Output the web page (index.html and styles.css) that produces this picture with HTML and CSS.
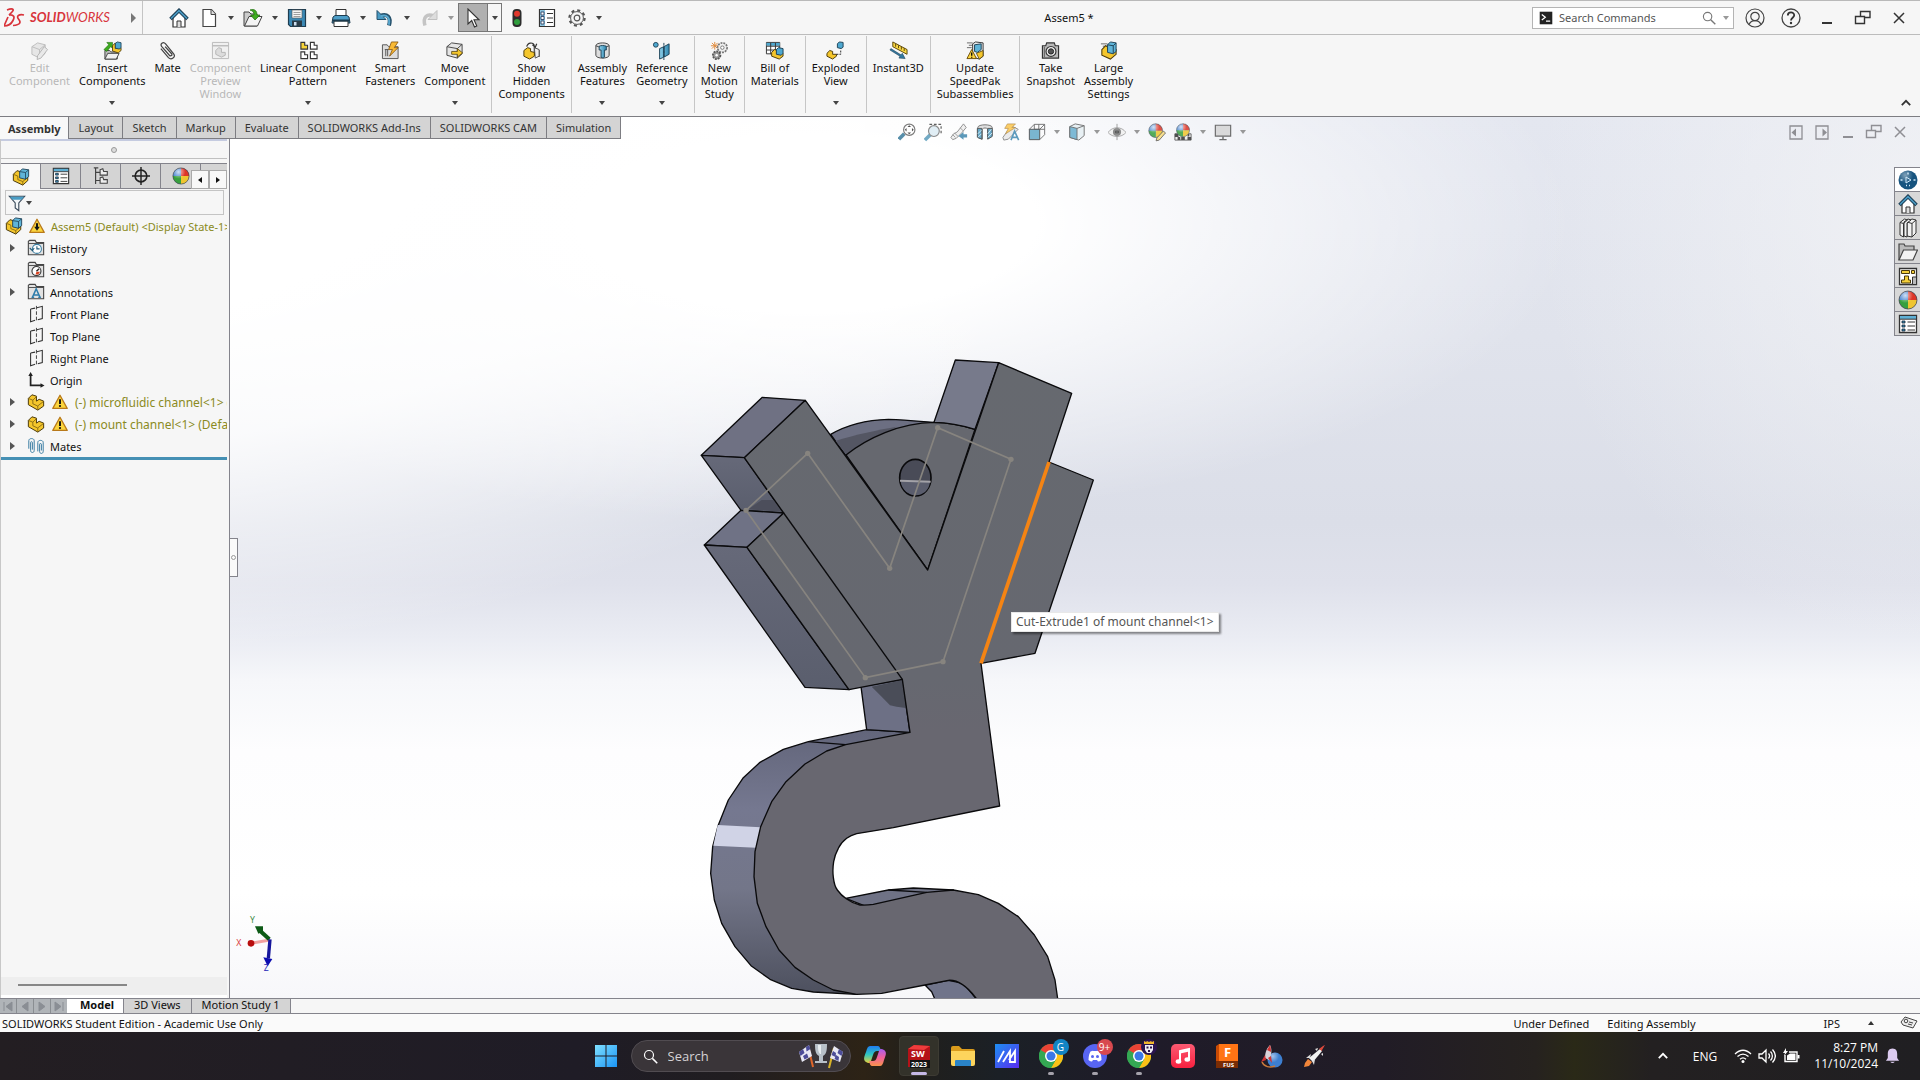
FILE: index.html
```html
<!DOCTYPE html>
<html lang="en">
<head>
    <meta charset="UTF-8">
    <meta name="viewport" content="width=device-width, initial-scale=1.0">
    <title>SOLIDWORKS - Assem5</title>
    <link rel="stylesheet" href="styles.css">
</head>
<body>
    <!-- Shared icons -->
    <svg class="sprite" aria-hidden="true">
        <defs>
            <linearGradient id="gWin" x1="0" y1="0" x2="1" y2="1"><stop offset="0" stop-color="#7fe0ff"/><stop offset="1" stop-color="#1a94f5"/></linearGradient>
            <linearGradient id="gBlue" x1="0" y1="0" x2="1" y2="0"><stop offset="0" stop-color="#8fd0ea"/><stop offset="1" stop-color="#2f87b0"/></linearGradient>
            <linearGradient id="gAsus" x1="0" y1="0" x2="1" y2="1"><stop offset="0" stop-color="#1d8ff2"/><stop offset="1" stop-color="#5a2cf0"/></linearGradient>
            <linearGradient id="gMusic" x1="0" y1="0" x2="0" y2="1"><stop offset="0" stop-color="#fb5a72"/><stop offset="1" stop-color="#f8203f"/></linearGradient>
            <linearGradient id="gCopA" x1="0" y1="0" x2="0" y2="1"><stop offset="0" stop-color="#1f7cf0"/><stop offset=".5" stop-color="#2fc6c0"/><stop offset="1" stop-color="#e8d23a"/></linearGradient>
            <linearGradient id="gCopB" x1="0" y1="0" x2="0" y2="1"><stop offset="0" stop-color="#a95cf0"/><stop offset=".5" stop-color="#f0619c"/><stop offset="1" stop-color="#f8934a"/></linearGradient>
            <radialGradient id="gShine" cx=".35" cy=".25" r=".7"><stop offset="0" stop-color="#fff" stop-opacity=".75"/><stop offset=".6" stop-color="#fff" stop-opacity="0"/></radialGradient>
        </defs>
        <symbol id="i-home" viewBox="0 0 20 20"><path d="M4 9v10h12V9L10 3z" fill="#fff" stroke="#333" stroke-width="1.2"/><path d="M8 19v-6h4v6" fill="#ddd" stroke="#333"/><path d="M1.5 11L10 2.5 18.500 11" fill="none" stroke="#1d3e54" stroke-width="3.6"/><path d="M2 10.500L10 2.700 18 10.500" fill="none" stroke="#4a9bc4" stroke-width="1.600"/></symbol>
        <symbol id="i-new" viewBox="0 0 20 20"><path d="M4 1.500h8.500L16.500 6v12.500H4z" fill="#fff" stroke="#444" stroke-width="1.2"/><path d="M12 1.500V6.500h4.500" fill="#ddd" stroke="#444"/></symbol>
        <symbol id="i-open" viewBox="0 0 20 20"><path d="M1 4h5l2 2h6v12H1z" fill="#ccc" stroke="#444"/><path d="M1.500 18L6 8.500h13L14.500 18z" fill="#f4f4f4" stroke="#444"/><path d="M7 2c5-1.500 7 1 7 5h3l-5 5-4.500-5H11c0-3-1-4-4-5z" fill="#3eaa1f" stroke="#1d6b0b" stroke-width=".7"/></symbol>
        <symbol id="i-save" viewBox="0 0 20 20"><path d="M1.500 1.500h17v17h-15l-2-2z" fill="#3b89b5" stroke="#1f3d50" stroke-width="1.2"/><path d="M5 2h10v8H5z" fill="#f5f5f5" stroke="#555" stroke-width=".6"/><path d="M6.500 4.500h7M6.500 6.500h7M6.500 8.500h7" stroke="#888" stroke-width=".8"/><path d="M5 12.500h10v6H5z" fill="#2a3c48"/><path d="M7 14h2.500v3.500H7z" fill="#cde"/></symbol>
        <symbol id="i-print" viewBox="0 0 20 20"><path d="M5 1.500h10V9H5z" fill="#fff" stroke="#333"/><path d="M2 9l2-1.500h12L18 9l1 6H1z" fill="#4d9ec8" stroke="#1f3d50"/><path d="M3 13h14v5.500H3z" fill="#fff" stroke="#333"/><path d="M1.500 12.500h17" stroke="#1b3a4d" stroke-width="2"/></symbol>
        <symbol id="i-undo" viewBox="0 0 20 20"><path d="M5 8C12 5 16.500 9 14 17.500" fill="none" stroke="#25516c" stroke-width="4"/><path d="M2 2.500v9h9z" fill="#4a9bc4" stroke="#25516c"/><path d="M6 8C12 6 15.500 10 13.800 16.800" fill="none" stroke="#5aa9d0" stroke-width="2"/></symbol>
        <symbol id="i-redo" viewBox="0 0 20 20"><path d="M15 8C8 5 3.500 9 6 17.500" fill="none" stroke="#c4c4c4" stroke-width="3.500"/><path d="M18 2.500v9H9z" fill="#ddd" stroke="#c0c0c0"/></symbol>
        <symbol id="i-cursor" viewBox="0 0 20 20"><path d="M5 1v15l3.700-3.500L11.500 19l2.300-1-2.800-6.200H16z" fill="#fff" stroke="#333" stroke-width="1.100"/></symbol>
        <symbol id="i-traffic" viewBox="0 0 20 20"><rect x="5.500" y="1" width="9" height="18" rx="4" fill="#2c2c2c"/><circle cx="10" cy="5.800" r="3" fill="#e0372c"/><circle cx="10" cy="14" r="3" fill="#2f9d3d"/></symbol>
        <symbol id="i-options" viewBox="0 0 20 20"><path d="M2.500 1.500h15v17h-15z" fill="#fff" stroke="#333" stroke-width="1.2"/><path d="M3 2h5v16H3z" fill="#8cc4df"/><path d="M4 4h3v3H4zM4 8.500h3v3H4zM4 13h3v3H4z" fill="#fff" stroke="#235" stroke-width=".8"/><path d="M10 5.500h6M10 10h6M10 14.500h6" stroke="#333" stroke-width="1.200"/></symbol>
        <symbol id="i-gear" viewBox="0 0 20 20"><circle cx="10" cy="10" r="7.600" fill="none" stroke="#555" stroke-width="2.200" stroke-dasharray="3 2.970"/><circle cx="10" cy="10" r="6.400" fill="#f6f6f6" stroke="#555"/><circle cx="10" cy="10" r="2.800" fill="none" stroke="#555" stroke-width="1.200"/></symbol>
        <symbol id="i-prompt" viewBox="0 0 20 20"><path d="M1 1h18v18H1z" fill="#222"/><path d="M4 5l5 4-5 4M10 14.500h6" fill="none" stroke="#fff" stroke-width="1.800"/></symbol>
        <symbol id="i-search" viewBox="0 0 20 20"><circle cx="8" cy="8" r="6" fill="none" stroke="currentColor" stroke-width="1.600"/><path d="M12.500 12.500L19 19" stroke="currentColor" stroke-width="2"/></symbol>
        <symbol id="i-user" viewBox="0 0 20 20"><g fill="none" stroke="#444" stroke-width="1.200"><circle cx="10" cy="10" r="9"/><circle cx="10" cy="8.500" r="4.200"/><path d="M4 16.500c1.500-3 3.500-3.800 6-3.800s4.500.8 6 3.800"/></g></symbol>
        <symbol id="i-help" viewBox="0 0 20 20"><circle cx="10" cy="10" r="9" fill="none" stroke="#444" stroke-width="1.300"/><path d="M6.800 7.500c0-4 6.400-4 6.400-.2 0 2.400-3.200 2.600-3.200 5.200" fill="none" stroke="#333" stroke-width="1.800"/><circle cx="10" cy="15" r="1.200" fill="#333"/></symbol>
        <symbol id="i-min" viewBox="0 0 20 20"><path d="M5 15h10" stroke="currentColor" stroke-width="2"/></symbol>
        <symbol id="i-restore" viewBox="0 0 20 20"><path d="M2.500 8.500h9v7h-9zM7.500 8V3.500h9.500v6h-5" fill="none" stroke="currentColor" stroke-width="1.400"/></symbol>
        <symbol id="i-close" viewBox="0 0 20 20"><path d="M5 5l10 10M15 5L5 15" stroke="currentColor" stroke-width="1.500"/></symbol>
        <symbol id="i-chev" viewBox="0 0 20 20"><path d="M4 13l6-6 6 6" fill="none" stroke="currentColor" stroke-width="2.600"/></symbol>
        <symbol id="i-part" viewBox="0 0 20 20"><path d="M1.500 6l4-4 5 1.500V9l3-2 5 2v5.500L12 19 1.500 13z" fill="#f4c62c" stroke="#4b3a0a" stroke-width="1.100"/><path d="M1.500 6l5 2v4l5.500 2.500V19M6.500 8L10.500 4M12 14.300l6.500-5" fill="none" stroke="#7a5f10" stroke-width=".9"/></symbol>
        <symbol id="i-asm" viewBox="0 0 20 20"><path d="M1.500 7l4-4 4 1v6l8-1v5L12 19 1.500 14z" fill="#f4c62c" stroke="#4b3a0a" stroke-width="1.100"/><path d="M1.500 7l5 2v4l5.500 2V19M12 15l6-5" fill="none" stroke="#7a5f10" stroke-width=".9"/><path d="M8.500 4l3-3 7 1v7.500l-3.500 3-6.500-1.500z" fill="#5fb4d8" stroke="#1e4257"/><path d="M8.500 4l6.500 1v7.500M15 5l3.500-3" fill="none" stroke="#1e4257" stroke-width=".9"/></symbol>
        <symbol id="i-warn" viewBox="0 0 20 20"><path d="M10 1.500L19 18H1z" fill="#fcd53c" stroke="#b8791a" stroke-width="1.600" stroke-linejoin="round"/><path d="M10 6.500v6" stroke="#111" stroke-width="2.400"/><circle cx="10" cy="15" r="1.400" fill="#111"/></symbol>
        <symbol id="i-warndown" viewBox="0 0 20 20"><path d="M10 1.500L19 18H1z" fill="#fcd53c" stroke="#b8791a" stroke-width="1.600" stroke-linejoin="round"/><path d="M10 6.500v5" stroke="#111" stroke-width="2.600"/><path d="M6.500 11h7L10 15.800z" fill="#111"/></symbol>
        <symbol id="i-editc" viewBox="0 0 20 20"><path d="M2 6l6-4 8 2v9l-6 5-8-4z" fill="#e6e6e6" stroke="#bdbdbd"/><path d="M2 6l8 3v8M10 9l6-5" fill="none" stroke="#bdbdbd"/><path d="M15 6l3.500 3-7 9-4 1.500.5-4z" fill="#e9e9e9" stroke="#b4b4b4"/></symbol>
        <symbol id="i-insert" viewBox="0 0 20 20"><path d="M2 10h5l1.500 1.500H15V19H2z" fill="#bbb" stroke="#444"/><path d="M2 19l3-6h12l-3 6z" fill="#f0f0f0" stroke="#444"/><path d="M1 9l5-5-2-2.500h6V7.500L8 6 4 11z" fill="#3eaa1f" stroke="#1d6b0b" stroke-width=".6"/><path d="M10 5l3-3v6l6-1v3l-3 2.500-6-2z" fill="#f4c62c" stroke="#4b3a0a" stroke-width=".9"/><path d="M13 2.500L15 1l4 .8V7l-2 1.500-4-1z" fill="#4ea8d0" stroke="#1e4257" stroke-width=".9"/></symbol>
        <symbol id="i-clip" viewBox="0 0 20 20"><path d="M3 8l8 9.500c3 3 8-.5 5.500-4L8 3C5.500 0 1.500 3 4 6l8 9c1.500 1.500 3.500 0 2.300-1.600L7.500 6" fill="none" stroke="#444" stroke-width="1.300"/></symbol>
        <symbol id="i-preview" viewBox="0 0 20 20"><path d="M1.500 1.500h17v17h-17z" fill="#f0f0f0" stroke="#bbb"/><path d="M1.500 5h17" stroke="#bbb" stroke-width="1.500"/><path d="M5 10l3-3 3 1v4l4 0v3l-4 2-6-3z" fill="#dcdcdc" stroke="#b5b5b5"/></symbol>
        <symbol id="i-pattern" viewBox="0 0 20 20"><path d="M2 1.500h4v3h3v4H2z" fill="#f7d43a" stroke="#333" stroke-width="1.200"/><path d="M12 1.500h4v3h3v4h-7zM2 11.500h4v3h3v4H2zM12 11.500h4v3h3v4h-7z" fill="#fff" stroke="#333" stroke-width="1.200"/></symbol>
        <symbol id="i-smart" viewBox="0 0 20 20"><path d="M1.500 4h5l1.500 2h10v12.500h-16.500z" fill="#ddd" stroke="#555"/><path d="M4 9h4M5 9v7M7 9v7" stroke="#555"/><path d="M11 1h7l-4 6h4l-9 9 3-7H8z" fill="#f9b934" stroke="#7d4d07" stroke-width=".8"/></symbol>
        <symbol id="i-move" viewBox="0 0 20 20"><path d="M2 6l5-4 11 1.500v10L13 18 2 15z" fill="#e5e5e5" stroke="#444"/><path d="M2 6l11 2v10M13 8l5-4.500" fill="none" stroke="#444"/><path d="M7 11h6V8l5.500 4.500L13 17v-3H7z" fill="#f4c62c" stroke="#4b3a0a" stroke-width=".8"/></symbol>
        <symbol id="i-show" viewBox="0 0 20 20"><path d="M5 6c1-5 7-5 8-1M11 4l3 2.500L15.500 3M13 7l5 3v6l-5-2z" fill="none" stroke="#333" stroke-width="1.300"/><path d="M13 7l5 2v7l-4 2z" fill="#eee" stroke="#555"/><path d="M2 10l4-3 3 1v3l4 1v4l-5 3-6-3z" fill="#f4c62c" stroke="#4b3a0a"/></symbol>
        <symbol id="i-feat" viewBox="0 0 20 20"><path d="M3 5c0-4 14-4 14 0v10c0 4-14 4-14 0z" fill="#ddd" stroke="#444"/><path d="M3 5c3 2 11 2 14 0" fill="none" stroke="#444"/><path d="M6.500 5.500c2-1 5-1 7.500 0v4h-2v7.500c-1 1-2 1-3.500 0V9.500h-2z" fill="url(#gBlue)" stroke="#1e4257"/></symbol>
        <symbol id="i-refg" viewBox="0 0 20 20"><circle cx="4" cy="4" r="2.500" fill="#4ea8d0" stroke="#1e4257"/><path d="M8 8l4.500-2v11L8 19zM12.500 6L18 3v11l-5.500 3z" fill="url(#gBlue)" stroke="#1e4257"/><path d="M12.500 2v18" stroke="#1e4257" stroke-dasharray="3 1"/></symbol>
        <symbol id="i-motion" viewBox="0 0 20 20"><path d="M5 1v8M1 5h8M2 2l6 6M8 2L2 8" stroke="#e08a3c"/><circle cx="13" cy="7" r="5" fill="#eee" stroke="#777" stroke-width="1.800" stroke-dasharray="2 1"/><circle cx="13" cy="7" r="1.800" fill="#fff" stroke="#777"/><circle cx="7" cy="15" r="4" fill="#999" stroke="#555" stroke-width="1.800" stroke-dasharray="2 1"/><circle cx="7" cy="15" r="1.300" fill="#fff"/></symbol>
        <symbol id="i-bom" viewBox="0 0 20 20"><path d="M1.500 1.500h14v12h-14z" fill="#fff" stroke="#333"/><path d="M1.500 2h14v3h-14z" fill="#4ea8d0"/><path d="M1.500 5.500h14M1.500 9.500h14M6 2v12M11 2v12" stroke="#333"/><path d="M7 12l3-3 3 1v4l6-1v3l-4 3-8-3z" fill="#f4c62c" stroke="#4b3a0a"/><path d="M12 9l2-2 5 1v5l-2 2-5-1z" fill="#4ea8d0" stroke="#1e4257"/></symbol>
        <symbol id="i-explode" viewBox="0 0 20 20"><path d="M1 13l3-3 3 1v3l4 0v2l-4 3-6-3z" fill="#f4c62c" stroke="#4b3a0a"/><path d="M12 3l2-2 4 .5v5L16 8l-4-1z" fill="#4ea8d0" stroke="#1e4257"/><path d="M11 14h4.500V9" fill="none" stroke="#222" stroke-dasharray="2 1.200"/></symbol>
        <symbol id="i-instant" viewBox="0 0 20 20"><path d="M4 1l15 8v5L4 6z" fill="#f9d743" stroke="#5a4608"/><path d="M7 3v3M10 4.500v3M13 6v3M16 7.500v3" stroke="#5a4608"/><path d="M1 9.500l10.500 6.500-1 2 6.500.5-3-5.500-1.500 1.500L2 8z" fill="#33789f" stroke="#1e4257" stroke-width=".6"/></symbol>
        <symbol id="i-speed" viewBox="0 0 20 20"><path d="M1 2h6M3 4.500h5M1 7h5" stroke="#666"/><path d="M7 3l3-2 8 1v14l-4 3-7-2z" fill="#eee" stroke="#333"/><path d="M9 4l7-1v6l-4 3-3-1z" fill="#5fb4d8" stroke="#1e4257"/><path d="M11 13l7-3v6l-4 3z" fill="#f4c62c" stroke="#4b3a0a" stroke-width=".8"/><path d="M6 9l5 9.500H1z" fill="#fcd53c" stroke="#6d4e08"/><path d="M6 12v3.500M6 16.500v1" stroke="#111" stroke-width="1.500"/></symbol>
        <symbol id="i-camera" viewBox="0 0 20 20"><path d="M1.500 5H5l1-3h8l1 3h3.500v13h-17z" fill="#b9b9b9" stroke="#333" stroke-width="1.200"/><circle cx="10.500" cy="11" r="5.200" fill="#f2f2f2" stroke="#333" stroke-width="1.200"/><circle cx="10.500" cy="11" r="2.800" fill="#555" stroke="#222"/><path d="M3.500 6v11" stroke="#555"/></symbol>
        <symbol id="i-large" viewBox="0 0 20 20"><path d="M2 3h7M4 5.500h5" stroke="#666"/><path d="M3 9l4-4 2 1v4l9-1v5l-6 5-9-4z" fill="#f4c62c" stroke="#4b3a0a" stroke-width="1.100"/><path d="M9 4l3-3 6 1v9l-3 2.500-6-1.500z" fill="#5fb4d8" stroke="#1e4257"/><path d="M9 4l6 1v8M15 5l3-3" fill="none" stroke="#1e4257"/></symbol>
        <symbol id="i-zfit" viewBox="0 0 20 20"><path d="M1 18l6-6" stroke="#3a7b9c" stroke-width="4"/><circle cx="12.500" cy="7.500" r="6.300" fill="#fff" stroke="#666" stroke-width="1.300"/><path d="M12.500 2.500l2 2h-4zM12.500 12.500l2-2h-4zM7.500 7.500l2-2v4zM17.500 7.500l-2-2v4z" fill="#333"/></symbol>
        <symbol id="i-zarea" viewBox="0 0 20 20"><path d="M1 19l6-6" stroke="#5a9cbb" stroke-width="4"/><path d="M6 1.500h13v12" fill="none" stroke="#444" stroke-width="1.300" stroke-dasharray="3 2"/><circle cx="11" cy="9" r="6" fill="#dcecf4" stroke="#777" stroke-width="1.300"/></symbol>
        <symbol id="i-prev" viewBox="0 0 20 20"><path d="M15 1l3 4-5 6-6 6-4 1.500L1 16l3-4 4-2z" fill="#eee" stroke="#777"/><path d="M5 11l4 4M11 5l4 4M3 13l3 3" stroke="#888"/><path d="M19 12.500v3.500h-4v2.500L9.500 14.500 15 10v2.500z" fill="#3f87ad"/></symbol>
        <symbol id="i-section" viewBox="0 0 20 20"><path d="M2 5c0-4 16-4 16 0v9l-5 3V7c-1-2-5-2-6 0v11l-5-2z" fill="#dcdcdc" stroke="#555"/><path d="M1.500 6h5v12l-5-2zM13 6h5v9l-5 3z" fill="#4f9dc2" stroke="#333"/><path d="M2 12l4-4M2 16l4-4M13 12l4-5M13 16l5-5" stroke="#d8eef8"/></symbol>
        <symbol id="i-annot" viewBox="0 0 20 20"><path d="M12 4l6 3-6 6-5 5-5 1-1-3 5-7z" fill="#e8e8e8" stroke="#777"/><path d="M6 1h9l-4 4h4L4 12l3-6H3z" fill="#fbc64e" stroke="#a6772a" stroke-width=".7"/><path d="M10 19l4-10 4.500 10M11.500 16h5.500" fill="none" stroke="#4089b3" stroke-width="1.800"/></symbol>
        <symbol id="i-orient" viewBox="0 0 20 20"><path d="M7 1.500h11.500V13L13 18.500M7 1.500L1.500 7M18.500 1.500L13 7M12 1.500V7M18.500 7H7V1.500" fill="none" stroke="#555"/><path d="M1.500 7H13v11.500H1.500z" fill="#64a9c9" stroke="#333"/></symbol>
        <symbol id="i-display" viewBox="0 0 20 20"><path d="M2 4l6-3 10 2v11l-6 5-10-3z" fill="#e6eff3" stroke="#555"/><path d="M2 4l8 2v12.500l-8-2.500z" fill="#69b0d0" stroke="#555"/><path d="M10 6l8-3" stroke="#555"/></symbol>
        <symbol id="i-eye" viewBox="0 0 20 20"><path d="M0 10.500c5-7 15-7 20 0-5 6-15 6-20 0z" fill="#f0f0f0" stroke="#999"/><circle cx="10" cy="10" r="4.500" fill="#777"/><circle cx="10" cy="10" r="2" fill="#222"/><path d="M10 1v18" stroke="#888"/></symbol>
        <symbol id="i-sphere" viewBox="0 0 20 20"><circle cx="10" cy="10" r="9" fill="#3f7fd0"/><path d="M10 10V1a9 9 0 0 1 9 9z" fill="#dd3527"/><path d="M10 10h9a9 9 0 0 1-9 9z" fill="#efc52f"/><path d="M10 10v9a9 9 0 0 1-9-9z" fill="#37a03e"/><circle cx="10" cy="10" r="9" fill="url(#gShine)" stroke="#444" stroke-width=".7"/></symbol>
        <symbol id="i-appear" viewBox="0 0 20 20"><use href="#i-sphere" width="17" height="17"/><path d="M17 9l2.500 2-7 8-3.500.8.800-3.200z" fill="#f9dc7c" stroke="#444" stroke-width=".9"/></symbol>
        <symbol id="i-scene" viewBox="0 0 20 20"><path d="M1 12h18v7H1z" fill="#eee" stroke="#444"/><path d="M1 12h4v3.500H1zM8 15.500h4V19H8zM15 15.500h4V19h-4zM4 15.500h3V19H4zM15 12h2v3h-2z" fill="#333"/><use href="#i-sphere" x="2" width="16" height="16"/></symbol>
        <symbol id="i-monitor" viewBox="0 0 20 20"><path d="M1.500 2.500h17v12h-17z" fill="#d5d5d5" stroke="#555" stroke-width="1.300"/><path d="M10 15v3M6 18.500h8" stroke="#555" stroke-width="1.600"/></symbol>
        <symbol id="i-paneL" viewBox="0 0 20 20"><path d="M4 4h12v13H4z" fill="none" stroke="currentColor" stroke-width="1.300"/><path d="M10 6.500v8L5.500 10.500z" fill="currentColor"/></symbol>
        <symbol id="i-paneR" viewBox="0 0 20 20"><path d="M4 4h12v13H4z" fill="none" stroke="currentColor" stroke-width="1.300"/><path d="M10.500 6.500v8L15 10.500z" fill="currentColor"/></symbol>
        <symbol id="i-props" viewBox="0 0 20 20"><path d="M1.500 1.500h17v17h-17z" fill="#fff" stroke="#333" stroke-width="1.300"/><path d="M2 2h16v3H2z" fill="#5fb0d4"/><path d="M4 7h3v2H4zM4 11h3v2H4zM4 15h3v2H4z" fill="#3f92ba" stroke="#123" stroke-width=".8"/><path d="M9.500 8H17M9.500 12H17M9.500 16H17M2 5.200h16" stroke="#333"/></symbol>
        <symbol id="i-config" viewBox="0 0 20 20"><path d="M2 1h5M4 1v18M4 6h6M4 15h6" stroke="#444" stroke-width="1.300" fill="none"/><path d="M9 3l3-1 1 3h4v4h-8zM9 12l3-1 1 3h4v4h-8z" fill="#eee" stroke="#444" stroke-width="1.200"/></symbol>
        <symbol id="i-target" viewBox="0 0 20 20"><circle cx="10" cy="10" r="6.500" fill="none" stroke="#222" stroke-width="1.800"/><path d="M10 0v20M0 10h20" stroke="#222" stroke-width="1.600"/></symbol>
        <symbol id="i-funnel" viewBox="0 0 20 20"><path d="M1.500 2.500h17L12 10v8.500L8 15.500V10z" fill="#f2f6f8" stroke="#345" stroke-width="1.200"/><path d="M2 3h16l-3 3.500H5z" fill="#4a9dc5"/></symbol>
        <symbol id="i-folder" viewBox="0 0 20 20"><path d="M1.500 17.500v-15L3 1.500h6L10.500 4h8v13.500z" fill="#e2e2e2" stroke="#444" stroke-width="1.200"/><path d="M1.500 5h17" stroke="#444"/></symbol>
        <symbol id="i-history" viewBox="0 0 20 20"><use href="#i-folder"/><circle cx="11" cy="11" r="5" fill="#fff" stroke="#3a7fa3" stroke-width="1.200"/><path d="M11 8v3h3M3 10l3 3 2-3" fill="none" stroke="#1e5877" stroke-width="1.200"/></symbol>
        <symbol id="i-sensor" viewBox="0 0 20 20"><use href="#i-folder"/><circle cx="10.500" cy="11.200" r="5" fill="#fff" stroke="#333" stroke-width="1.200"/><path d="M10.500 11.500l3-3" stroke="#222" stroke-width="1.500"/><path d="M10.500 12h4l-2 3h-3z" fill="#d9421f"/></symbol>
        <symbol id="i-annof" viewBox="0 0 20 20"><use href="#i-folder"/><path d="M6 16l4.200-9.500L14.500 16M7.500 13.300h5.500M5 16h3M12.500 16h3" fill="none" stroke="#2d7caa" stroke-width="1.600"/></symbol>
        <symbol id="i-plane" viewBox="0 0 20 20"><path d="M4 4.500l5-1M11 3l6-1.500V15l-5 1.500M9 17l-5 1.500v-14" fill="none" stroke="#333" stroke-width="1.200"/><path d="M10.500 1v18" stroke="#333" stroke-dasharray="4 2"/></symbol>
        <symbol id="i-origin" viewBox="0 0 20 20"><path d="M4 4v12h12" fill="none" stroke="#222" stroke-width="1.900"/><path d="M1.500 5.500L4 1l2.500 4.500zM15 13.500l4.500 2.500-4.500 2.500z" fill="#222"/></symbol>
        <symbol id="i-mates" viewBox="0 0 20 20"><path d="M2 13V4c0-3 6-3 6 0v11c0 3-4 3-4 0V6c0-1 2-1 2 0v8M12 16V6c0-3 6-3 6 0v10c0 3-4 3-4 0V8c0-1 2-1 2 0v7" fill="none" stroke="#3b7da3" stroke-width="1.100"/></symbol>
        <symbol id="i-3dx" viewBox="0 0 20 20"><circle cx="10" cy="10" r="9.500" fill="#17547f"/><circle cx="10" cy="10" r="9.500" fill="url(#gShine)" opacity=".6"/><path d="M8 7l5 3-5 3z" fill="none" stroke="#cfe8f8"/><path d="M2.500 10h2M15.500 10h2M10 2.500v2M8 15.500h1M11 15.500h1" stroke="#cfe8f8" stroke-width="1.500"/></symbol>
        <symbol id="i-books" viewBox="0 0 20 20"><g fill="#f2f2f2" stroke="#333"><path d="M9 4l5-3 4 1v13l-4 4-5-1z"/><path d="M14 5.500l4-3.500M14 5.500V19M9 4l5 1.500"/><path d="M6 4l4-3 3 1-4 3v14l-3-1zM2 4.500L6.500 1l3 1-4 3.500V19L2 17z"/><path d="M2 4.500l3.500 1"/></g></symbol>
        <symbol id="i-pfolder" viewBox="0 0 20 20"><path d="M1 18V2h5l1 2h9v4" fill="#bbb" stroke="#444" stroke-width="1.200"/><path d="M1 18L5.500 8H19.500L15 18z" fill="#f3f3f3" stroke="#444" stroke-width="1.200"/></symbol>
        <symbol id="i-palette" viewBox="0 0 20 20"><path d="M1.500 2.500h17v16h-17z" fill="#fff" stroke="#333" stroke-width="1.300"/><path d="M3.500 4.500h8v3h-8zM13.500 4.500h3v3h-3zM3.500 17v-3h3v-4h4v4h2v3z" fill="#f4cf3a" stroke="#4b3a0a"/><path d="M14.500 11h4v7.500h-4z" fill="#bbb" stroke="#333"/></symbol>
        <symbol id="i-chrome" viewBox="0 0 24 24"><circle cx="12" cy="12" r="12" fill="#34a853"/><path d="M12 12L1.600 6A12 12 0 0 1 22.400 6z" fill="#ea4335"/><path d="M12 6h10.400A12 12 0 0 1 12 24l5.200-9z" fill="#fbc116"/><path d="M1.600 6A12 12 0 0 0 12 24l5.200-9H7z" fill="#34a853"/><circle cx="12" cy="12" r="6" fill="#fff"/><circle cx="12" cy="12" r="4.500" fill="#3b78e7"/></symbol>
    </svg>

    <!-- Title bar -->
    <header class="titlebar">
        <div class="brand">
            <svg width="22" height="22" viewBox="0 0 22 22"><g fill="none" stroke="#d8343b" stroke-width="1.700"><path d="M3 3c5-2 8-1 5 2L5 8"/><path d="M5 8c5-.5 6 2 4 5.500C7.500 16.500 4 19 0 19L4 10"/><path d="M20 8c-5-1-8 1-5.500 4S17 18 9 18.500"/></g></svg>
            <span class="brand-name"><b>SOLID</b>WORKS</span>
            <button class="brand-arrow" aria-label="Show menus"></button>
        </div>
        <div class="quick">
            <button class="tool" aria-label="Home"><svg><use href="#i-home"/></svg></button>
            <button class="tool" aria-label="New"><svg><use href="#i-new"/></svg></button><button class="drop" aria-label="New options"></button>
            <button class="tool" aria-label="Open"><svg><use href="#i-open"/></svg></button><button class="drop" aria-label="Open options"></button>
            <button class="tool" aria-label="Save"><svg><use href="#i-save"/></svg></button><button class="drop" aria-label="Save options"></button>
            <button class="tool" aria-label="Print"><svg><use href="#i-print"/></svg></button><button class="drop" aria-label="Print options"></button>
            <button class="tool" aria-label="Undo"><svg><use href="#i-undo"/></svg></button><button class="drop" aria-label="Undo options"></button>
            <button class="tool" aria-label="Redo" disabled><svg><use href="#i-redo"/></svg></button><button class="drop faded" aria-label="Redo options"></button>
            <button class="tool selected" aria-label="Select"><svg><use href="#i-cursor"/></svg></button><button class="drop boxed" aria-label="Select options"></button>
            <button class="tool" aria-label="Rebuild"><svg><use href="#i-traffic"/></svg></button>
            <button class="tool" aria-label="File properties"><svg><use href="#i-options"/></svg></button>
            <button class="tool" aria-label="Options"><svg><use href="#i-gear"/></svg></button><button class="drop" aria-label="More options"></button>
        </div>
        <div class="doc-title">Assem5 *</div>
        <div class="search">
            <svg class="prompt"><use href="#i-prompt"/></svg>
            <input type="text" placeholder="Search Commands" aria-label="Search Commands">
            <svg class="glass"><use href="#i-search"/></svg>
            <button class="drop faded" aria-label="Search scope"></button>
        </div>
        <div class="window-buttons">
            <button aria-label="Account"><svg><use href="#i-user"/></svg></button>
            <button aria-label="Help"><svg><use href="#i-help"/></svg></button>
            <button aria-label="Minimize"><svg><use href="#i-min"/></svg></button>
            <button aria-label="Restore"><svg><use href="#i-restore"/></svg></button>
            <button aria-label="Close"><svg><use href="#i-close"/></svg></button>
        </div>
    </header>

    <!-- Command ribbon -->
    <div class="ribbon">
        <div class="group">
            <button class="cmd" disabled><svg><use href="#i-editc"/></svg><span>Edit<br>Component</span></button>
            <button class="cmd more"><svg><use href="#i-insert"/></svg><span>Insert<br>Components</span></button>
            <button class="cmd"><svg><use href="#i-clip"/></svg><span>Mate</span></button>
            <button class="cmd" disabled><svg><use href="#i-preview"/></svg><span>Component<br>Preview<br>Window</span></button>
            <button class="cmd more"><svg><use href="#i-pattern"/></svg><span>Linear Component<br>Pattern</span></button>
            <button class="cmd"><svg><use href="#i-smart"/></svg><span>Smart<br>Fasteners</span></button>
            <button class="cmd more"><svg><use href="#i-move"/></svg><span>Move<br>Component</span></button>
        </div>
        <div class="group">
            <button class="cmd"><svg><use href="#i-show"/></svg><span>Show<br>Hidden<br>Components</span></button>
        </div>
        <div class="group">
            <button class="cmd more"><svg><use href="#i-feat"/></svg><span>Assembly<br>Features</span></button>
            <button class="cmd more"><svg><use href="#i-refg"/></svg><span>Reference<br>Geometry</span></button>
        </div>
        <div class="group">
            <button class="cmd"><svg><use href="#i-motion"/></svg><span>New<br>Motion<br>Study</span></button>
        </div>
        <div class="group">
            <button class="cmd"><svg><use href="#i-bom"/></svg><span>Bill of<br>Materials</span></button>
        </div>
        <div class="group">
            <button class="cmd more"><svg><use href="#i-explode"/></svg><span>Exploded<br>View</span></button>
        </div>
        <div class="group">
            <button class="cmd"><svg><use href="#i-instant"/></svg><span>Instant3D</span></button>
        </div>
        <div class="group">
            <button class="cmd"><svg><use href="#i-speed"/></svg><span>Update<br>SpeedPak<br>Subassemblies</span></button>
        </div>
        <div class="group last">
            <button class="cmd"><svg><use href="#i-camera"/></svg><span>Take<br>Snapshot</span></button>
            <button class="cmd"><svg><use href="#i-large"/></svg><span>Large<br>Assembly<br>Settings</span></button>
        </div>
        <button class="collapse" aria-label="Collapse ribbon"><svg><use href="#i-chev"/></svg></button>
    </div>

    <main class="work">
        <nav class="cmd-tabs">
            <button class="active">Assembly</button>
            <button>Layout</button>
            <button>Sketch</button>
            <button>Markup</button>
            <button>Evaluate</button>
            <button>SOLIDWORKS Add-Ins</button>
            <button>SOLIDWORKS CAM</button>
            <button>Simulation</button>
        </nav>

        <div class="columns">
            <!-- Feature manager -->
            <aside class="panel">
                <div class="grip"><i></i></div>
                <div class="panel-tabs">
                    <button class="active" aria-label="Feature tree"><svg><use href="#i-asm"/></svg></button>
                    <button aria-label="Properties"><svg><use href="#i-props"/></svg></button>
                    <button aria-label="Configurations"><svg><use href="#i-config"/></svg></button>
                    <button aria-label="Dimensions"><svg><use href="#i-target"/></svg></button>
                    <button aria-label="Display"><svg><use href="#i-sphere"/></svg></button>
                    <div class="panel-scroll"><button aria-label="Previous tabs"><i class="left"></i></button><button aria-label="Next tabs"><i class="right"></i></button></div>
                </div>
                <div class="filter">
                    <button aria-label="Filter"><svg><use href="#i-funnel"/></svg><i class="caret"></i></button>
                </div>
                <ul class="tree">
                    <li class="root"><svg><use href="#i-asm"/></svg><svg class="warn"><use href="#i-warndown"/></svg><span>Assem5 (Default) &lt;Display State-1&gt;</span></li>
                    <li><button class="expand" aria-label="Expand"></button><svg><use href="#i-history"/></svg><span>History</span></li>
                    <li><svg><use href="#i-sensor"/></svg><span>Sensors</span></li>
                    <li><button class="expand" aria-label="Expand"></button><svg><use href="#i-annof"/></svg><span>Annotations</span></li>
                    <li><svg><use href="#i-plane"/></svg><span>Front Plane</span></li>
                    <li><svg><use href="#i-plane"/></svg><span>Top Plane</span></li>
                    <li><svg><use href="#i-plane"/></svg><span>Right Plane</span></li>
                    <li><svg><use href="#i-origin"/></svg><span>Origin</span></li>
                    <li class="component"><button class="expand" aria-label="Expand"></button><svg><use href="#i-part"/></svg><svg class="warn"><use href="#i-warn"/></svg><span>(-) microfluidic channel&lt;1&gt; (Default)</span></li>
                    <li class="component"><button class="expand" aria-label="Expand"></button><svg><use href="#i-part"/></svg><svg class="warn"><use href="#i-warn"/></svg><span>(-) mount channel&lt;1&gt; (Default)</span></li>
                    <li><button class="expand" aria-label="Expand"></button><svg><use href="#i-mates"/></svg><span>Mates</span></li>
                </ul>
                <div class="rollback"></div>
                <div class="h-scroll"><i></i></div>
            </aside>

            <!-- Graphics area -->
            <section class="viewport">
                <svg class="model" viewBox="-1350 -603 5070 2577" preserveAspectRatio="xMidYMid slice">
                    <defs>
                        <linearGradient id="bend" x1="0" y1="1169" x2="0" y2="1963" gradientUnits="userSpaceOnUse">
                            <stop offset="0" stop-color="#62657a"/><stop offset=".3" stop-color="#757890"/><stop offset=".6" stop-color="#737689"/><stop offset="1" stop-color="#4d505e"/>
                        </linearGradient>
                        <linearGradient id="face" x1="0" y1="60" x2="0" y2="1974" gradientUnits="userSpaceOnUse">
                            <stop offset="0" stop-color="#66696f"/><stop offset=".5" stop-color="#666870"/><stop offset=".58" stop-color="#686770"/><stop offset="1" stop-color="#686770"/>
                        </linearGradient>
                        <linearGradient id="side" x1="0" y1="0" x2="0" y2="1"><stop offset="0" stop-color="#666979"/><stop offset="1" stop-color="#5a5e6d"/></linearGradient>
                    </defs>
                    <g stroke="#0a0a0c" stroke-width="4" stroke-linejoin="round">
                        <!-- channel, side faces -->
                        <path d="M690 1177L560 1169 385 1205 310 1228 240 1267 190 1313 145 1380 115 1455 98 1520 92 1600 103 1680 125 1750 165 1820 213 1877 270 1918 335 1945 400 1956 530 1963 400 1600 480 1350z" fill="url(#bend)"/>
                        <path d="M385 1205L497 1214"/>
                        <path d="M113 1455l129 7-14 61-128-6z" fill="#d0d3e6" stroke="none"/>
                        <path d="M497 1675L625 1650 700 1644 820 1650 740 1700 560 1700z" fill="#6f7285"/>
                        <path d="M625 1650L740 1657"/>
                        <path d="M735 1935L805 1921 850 1930 900 1990 770 1990 755 1955z" fill="#70748a"/>
                        <path d="M543 1040L667 1018 690 1177 560 1169z" fill="#6d7085"/>
                        <path d="M575 1040L667 1020 678 1104 650 1100 630 1096 605 1070z" fill="#4a4d58" stroke="none"/>
                        <!-- disc behind the arms -->
                        <path d="M452 283C500 255 560 240 625 238 690 240 740 246 762 247L743 690z" fill="#6c6f82"/>
                        <path d="M466 303C520 285 600 268 650 260L500 345z" fill="#545663" stroke="none"/>
                        <path d="M498 345C560 295 660 248 762 247 810 248 850 257 885 268L743 690z" fill="#66686f"/>
                        <!-- arms -->
                        <path d="M826 60L956 68 885 268C850 257 810 248 762 247z" fill="#777a8b"/>
                        <path d="M247 172L376 181 193 353 64 346z" fill="#6f7183"/>
                        <path d="M64 346L193 353 311 519 183 511z" fill="url(#side)"/>
                        <path d="M183 511L311 519 201 622 73 615z" fill="#6f7285"/>
                        <path d="M205 508L245 480 283 480 307 515z" fill="#4c4e5b" stroke="none"/>
                        <path d="M73 615L201 622 507 1049 375 1042z" fill="url(#side)"/>
                        <!-- front face -->
                        <path fill="url(#face)" d="M956 68L1175 160 1107 366 1240 420 1065 940 903 970 959 1398 640 1463 530 1481Q512 1486 500 1495 483 1508 475 1525 464 1545 461 1565 457 1590 460 1612 463 1638 472 1650 484 1667 500 1677 518 1690 540 1695 560 1696 580 1693L740 1657 820 1650 895 1664 955 1690 1015 1730 1063 1785 1103 1850 1125 1920 1135 1990 900 1990 887 1973Q845 1918 805 1921L735 1935 605 1960 530 1963 460 1950 400 1920 345 1882 297 1830 258 1760 232 1690 222 1610 225 1535 242 1460 275 1385 318 1325 375 1272 440 1233 497 1214 690 1177 667 1018 507 1049 201 622 311 519 193 353 376 181 743 690z"/>
                        <path d="M311 519L667 1018"/>
                    </g>
                    <ellipse cx="706" cy="413" rx="47" ry="55" fill="#494b57" stroke="#0a0a0c" stroke-width="5"/>
                    <path d="M662 425h88c-6 54-78 54-88 0z" fill="#5a5d6d"/>
                    <path d="M660 422L752 425" stroke="#a3a2a8" stroke-width="6"/>
                    <path d="M383 340L629 685 773 263 993 358 789 965 556 1013 198 511z" fill="none" stroke="#87847f" stroke-width="5"/>
                    <g fill="#87847f"><circle cx="383" cy="340" r="8"/><circle cx="629" cy="685" r="8"/><circle cx="773" cy="263" r="8"/><circle cx="993" cy="358" r="8"/><circle cx="789" cy="965" r="8"/><circle cx="556" cy="1013" r="8"/><circle cx="198" cy="511" r="8"/></g>
                    <path d="M1107 366L903 970" stroke="#f58413" stroke-width="11"/>
                    <!-- axis triad -->
                    <g transform="translate(-2040 1680)">
                        <path d="M810 120L745 131" stroke="#f2a0a0" stroke-width="9"/><circle cx="753" cy="130" r="10" fill="#b80d0d"/>
                        <path d="M808 118L780 92" stroke="#0d5a16" stroke-width="12"/><path d="M765 79l24 0 0 14-14 8z" fill="#0d5a16"/>
                        <path d="M810 118L805 175" stroke="#16169c" stroke-width="10"/><path d="M790 172l27 5-14 22z" fill="#0c0cb0"/>
                        <g font-size="26"><text x="709" y="138" fill="#d84040">X</text><text x="750" y="68" fill="#3d8a46">Y</text><text x="791" y="214" fill="#2424b8">Z</text></g>
                    </g>
                </svg>

                <div class="hud">
                    <button aria-label="Zoom to fit"><svg><use href="#i-zfit"/></svg></button>
                    <button aria-label="Zoom to area"><svg><use href="#i-zarea"/></svg></button>
                    <button aria-label="Previous view"><svg><use href="#i-prev"/></svg></button>
                    <button aria-label="Section view"><svg><use href="#i-section"/></svg></button>
                    <button aria-label="Dynamic annotation views"><svg><use href="#i-annot"/></svg></button>
                    <button class="wide" aria-label="View orientation"><svg><use href="#i-orient"/></svg><i class="caret"></i></button>
                    <button class="wide" aria-label="Display style"><svg><use href="#i-display"/></svg><i class="caret"></i></button>
                    <button class="wide" aria-label="Hide or show items"><svg><use href="#i-eye"/></svg><i class="caret"></i></button>
                    <button aria-label="Edit appearance"><svg><use href="#i-appear"/></svg></button>
                    <button class="wide" aria-label="Apply scene"><svg><use href="#i-scene"/></svg><i class="caret"></i></button>
                    <button class="wide" aria-label="View settings"><svg><use href="#i-monitor"/></svg><i class="caret"></i></button>
                </div>

                <div class="doc-controls">
                    <button aria-label="Pane left"><svg><use href="#i-paneL"/></svg></button>
                    <button aria-label="Pane right"><svg><use href="#i-paneR"/></svg></button>
                    <button aria-label="Minimize document"><svg><use href="#i-min"/></svg></button>
                    <button aria-label="Restore document"><svg><use href="#i-restore"/></svg></button>
                    <button aria-label="Close document"><svg><use href="#i-close"/></svg></button>
                </div>

                <div class="task-pane">
                    <button class="active" aria-label="3DEXPERIENCE"><svg><use href="#i-3dx"/></svg></button>
                    <button aria-label="Resources"><svg><use href="#i-home"/></svg></button>
                    <button aria-label="Design library"><svg><use href="#i-books"/></svg></button>
                    <button aria-label="File explorer"><svg><use href="#i-pfolder"/></svg></button>
                    <button aria-label="View palette"><svg><use href="#i-palette"/></svg></button>
                    <button aria-label="Appearances"><svg><use href="#i-sphere"/></svg></button>
                    <button aria-label="Custom properties"><svg><use href="#i-props"/></svg></button>
                </div>

                <button class="splitter" aria-label="Hide panel"><i></i></button>
                <div class="tooltip" role="tooltip">Cut-Extrude1 of mount channel&lt;1&gt;</div>
            </section>
        </div>
    </main>

    <div class="model-tabs">
        <div class="steps">
            <button disabled aria-label="First tab"><svg viewBox="0 0 16 14"><path d="M4 3v9M12 3v9L6 7.500z"/></svg></button>
            <button disabled aria-label="Previous tab"><svg viewBox="0 0 16 14"><path d="M11 3v9L5 7.500z"/></svg></button>
            <button disabled aria-label="Next tab"><svg viewBox="0 0 16 14"><path d="M5 3v9l6-4.500z"/></svg></button>
            <button disabled aria-label="Last tab"><svg viewBox="0 0 16 14"><path d="M12 3v9M4 3v9l6-4.500z"/></svg></button>
        </div>
        <button class="active">Model</button>
        <button>3D Views</button>
        <button>Motion Study 1</button>
    </div>

    <footer class="status">
        <span class="edition">SOLIDWORKS Student Edition - Academic Use Only</span>
        <span class="state">Under Defined</span>
        <span class="mode">Editing Assembly</span>
        <button class="units">IPS<i class="up"></i></button>
        <svg class="tag" viewBox="0 0 18 14"><path d="M1 6l4-5 12 4-4 7-10-3z" fill="#eee" stroke="#444"/><circle cx="6" cy="5" r="1.800" fill="none" stroke="#444"/><path d="M9 6l4 1M8 8l4 1" stroke="#444"/></svg>
    </footer>

    <!-- Windows taskbar -->
    <footer class="taskbar">
        <div></div>
        <div class="apps">
            <button class="app" aria-label="Start"><svg viewBox="0 0 24 24"><path d="M1 1h10.500v10.500H1zM12.500 1H23v10.500H12.500zM1 12.500h10.500V23H1zM12.500 12.500H23V23H12.500z" fill="url(#gWin)"/></svg></button>
            <div class="task-search">
                <svg class="glass"><use href="#i-search"/></svg>
                <input type="text" placeholder="Search" aria-label="Search">
                <svg class="trophy" viewBox="0 0 48 26"><path d="M11 3l5 21" stroke="#e0662a" stroke-width="2"/><path d="M2 9l10-7 3 11-10 6z" fill="#e8e8f4"/><path d="M2 9l4-3 1.500 4-4 3zM9 4l3-2 1.500 4-4 2.500zM6 13l4-2.500 1.500 4-4 2z" fill="#4c4c98"/><path d="M37 5l-5 20" stroke="#d8b328" stroke-width="2"/><path d="M46 9L37 3l-4 12 10 4z" fill="#e8e8f4"/><path d="M46 9l-4-3-1.500 4 4 3zM39 10l-3-2-1.500 4 4 2zM42 14l-3-2-1.500 4 4 2z" fill="#4c4c98"/><path d="M18 1h12c0 8-1 10-4 12v5h4v2H18v-2h4v-5c-3-2-4-4-4-12z" fill="#b8c0c8"/><path d="M21 2h3v9h-1c-2-2-2-5-2-9z" fill="#e8edf0"/></svg>
            </div>
            <button class="app" aria-label="Copilot"><svg viewBox="0 0 24 24"><path d="M7 2h7c3 0 3 2 4 5h-4c-2 0-3 1-4 4l-2 6c-1 3-3 2-5 1-3-2-2-5 0-10 1-4 2-6 4-6z" fill="url(#gCopA)"/><path d="M17 22h-7c-3 0-3-2-4-5h4c2 0 3-1 4-4l2-6c1-3 3-2 5-1 3 2 2 5 0 10-1 4-2 6-4 6z" fill="url(#gCopB)"/></svg></button>
            <button class="app current" aria-label="SOLIDWORKS 2023"><svg viewBox="0 0 24 24"><path d="M1 5l6-4 16 1v17l-4 4H1z" fill="#b51218"/><path d="M1 5l6-4 16 1-6 4z" fill="#ee3c3c"/><text x="4" y="13" class="sw">SW</text><path d="M3 16h20v8H3z" fill="#151515"/><text x="4" y="23" class="yr">2023</text></svg></button>
            <button class="app" aria-label="File Explorer"><svg viewBox="0 0 24 24"><path d="M0 4q0-2 2-2h6l3 3h11q2 0 2 2v6H0z" fill="#d99b1c"/><path d="M0 7h24v13q0 2-2 2H2q-2 0-2-2z" fill="#fdd45c"/><path d="M5 16h14q1 0 1 1v5H4v-5q0-1 1-1z" fill="#2a84c8"/></svg></button>
            <button class="app" aria-label="MyASUS"><svg viewBox="0 0 24 24"><path d="M0 0h24v24H0z" fill="url(#gAsus)"/><path d="M3 18L9 7M8 18l7-11v11M14 18h6V7l-6 9" fill="none" stroke="#fff" stroke-width="1.800"/></svg></button>
            <button class="app open" aria-label="Chrome"><svg><use href="#i-chrome"/></svg><span class="badge blue">G</span></button>
            <button class="app open" aria-label="Discord"><svg viewBox="0 0 24 24"><circle cx="12" cy="12" r="12" fill="#5865f2"/><path d="M5.500 16c0-4 1-7 2-8.500Q10 6.500 10.500 7h3q.5-.5 3 .5c1 1.500 2 4.500 2 8.500q-2 1.500-3.500 1.500l-1-1.500h-4l-1 1.500q-1.500 0-3.500-1.500z" fill="#fff"/><circle cx="9.500" cy="12.500" r="1.500" fill="#5865f2"/><circle cx="14.500" cy="12.500" r="1.500" fill="#5865f2"/></svg><span class="badge red">9+</span></button>
            <button class="app open" aria-label="Chrome, second profile"><svg><use href="#i-chrome"/></svg><span class="badge purple"><svg viewBox="0 0 14 14"><path d="M2 4V1l2 1 1-1 2 1 2-1 1 1 2-1v3z" fill="#f0b62c"/><path d="M3 5h8v5l-2 3H5l-2-3z" fill="#f0eef4"/><path d="M4.500 6.500h2v2h-2zM8 6.500h2v2H8zM6 10h2v2H6z" fill="#2a1450"/></svg></span></button>
            <button class="app" aria-label="Apple Music"><svg viewBox="0 0 24 24"><rect width="24" height="24" rx="5" fill="url(#gMusic)"/><path d="M9 17V7l9-2v10" fill="none" stroke="#fff" stroke-width="2"/><path d="M9 8.500l9-2" stroke="#fff" stroke-width="2"/><ellipse cx="7.500" cy="17.500" rx="2.800" ry="2.200" fill="#fff"/><ellipse cx="16.300" cy="15.500" rx="2.800" ry="2.200" fill="#fff"/></svg></button>
            <button class="app" aria-label="Fusion"><svg viewBox="0 0 24 24"><path d="M1 2l3-2v22l-3 2z" fill="#c84a04"/><path d="M4 0h19v17H4z" fill="#ff7415"/><path d="M1 17h22v7H1z" fill="#7a2c04"/><text x="9" y="13" class="ff">F</text><text x="8" y="23" class="fus">FUS</text></svg></button>
            <button class="app" aria-label="Rocket simulator"><svg viewBox="0 0 24 24"><circle cx="16" cy="16" r="7.500" fill="#3d7fd0"/><circle cx="16" cy="16" r="7.500" fill="url(#gShine)" opacity=".7"/><path d="M11 1c2 4 2 9-1 15l-4-2c0-6 2-10 5-13z" fill="#d8d2d8"/><path d="M11 1c1 3 1 5 1 7L8 6zM6 11l-4 7 5-2zM9 14l4 5-1-7z" fill="#cf3535"/><path d="M3 18c2 5 8 6 13 4" fill="none" stroke="#c97a3a" stroke-width="1.500"/></svg></button>
            <button class="app" aria-label="OpenRocket"><svg viewBox="0 0 24 24"><path d="M17 5l2 2-9 11-4-4z" fill="#f2f2f2"/><path d="M20 2l-1 5-3-2zM20 2l2-1-3 5z" fill="#e04a3c"/><path d="M8 10l-5 4 4 0zM12 15l-1 6-2-4zM15 4l-3 1 2 2zM20 9l0 3-2-2z" fill="#ddd"/><path d="M5 15l4 3-3 4-5 1 1-4z" fill="#f2863a"/></svg></button>
        </div>
        <div class="tray">
            <button class="hidden-icons" aria-label="Show hidden icons"><svg><use href="#i-chev"/></svg></button>
            <button class="lang">ENG</button>
            <button class="net" aria-label="Network, volume and battery">
                <svg viewBox="0 0 18 18"><g fill="none" stroke="#fff" stroke-width="1.300"><path d="M1 7c5-5 11-5 16 0M3.500 9.500c4-3.500 7-3.500 11 0M6 12.200c2-1.800 4-1.800 6 0"/></g><circle cx="9" cy="14.500" r="1.500" fill="#fff"/></svg>
                <svg viewBox="0 0 18 18"><g fill="none" stroke="#fff" stroke-width="1.300"><path d="M1 7h3l4-4v12l-4-4H1zM10.500 6.500c1.300 1.500 1.300 3.500 0 5M12.500 4.500c2.500 2.500 2.500 6.500 0 9M14.500 2.500c3.500 4 3.500 9 0 13"/></g></svg>
                <svg viewBox="0 0 18 18"><path d="M3 8v6.500h12V5H7" fill="none" stroke="#fff" stroke-width="1.400"/><path d="M5 8.500l3-2h5.500v6.500H5zM15.500 8h2v3.500h-2zM4 1L1 6h2L2 9l4-5H4z" fill="#fff"/></svg>
            </button>
            <button class="clock"><span>8:27 PM</span><span>11/10/2024</span></button>
            <button class="bell" aria-label="Notifications"><svg viewBox="0 0 16 16"><path d="M8 0c4 0 5 3 5 6v4l2 3H1l2-3V6c0-3 1-6 5-6zM5.500 14h5q-2.500 3-5 0z" fill="#dccbf0"/></svg></button>
        </div>
    </footer>
</body>
</html>
```

FILE: styles.css
```css
* {
    box-sizing: border-box;
}

body {
    display: flex;
    flex-direction: column;
    height: 100vh;
    margin: 0;
    overflow: hidden;
    background: #f6f6f6;
    color: #111;
    font-family: "Noto Sans", "Open Sans", sans-serif;
    font-size: 11px;
    line-height: 13px;
}

button {
    padding: 0;
    border: none;
    background: none;
    color: inherit;
    font: inherit;
}

input {
    min-width: 0;
    padding: 0;
    border: none;
    outline: none;
    background: none;
    color: inherit;
    font: inherit;
}

svg {
    display: block;
    flex-shrink: 0;
}

.sprite {
    position: absolute;
    width: 0;
    height: 0;
}

.caret,
.drop::after,
.cmd.more::after {
    content: "";
    border: 3px solid transparent;
    border-top: 4px solid #444;
    border-bottom: none;
}

/* Title bar */
.titlebar {
    display: flex;
    align-items: center;
    height: 35px;
    border-top: 1px solid #b9b9b9;
    border-bottom: 1px solid #bcbcbc;
}

.brand {
    display: flex;
    align-items: center;
    gap: 4px;
    width: 143px;
    height: 100%;
    padding-left: 4px;
    border-right: 1px solid #c4c4c4;
    color: #d8343b;
}

.brand-name {
    font-family: Lato, sans-serif;
    font-size: 13px;
    font-style: italic;
}

.brand-arrow {
    margin: 0 6px 0 auto;
    border: 5px solid transparent;
    border-left-color: #777;
    border-right: none;
}

.quick {
    display: flex;
    height: 100%;
    padding-left: 21px;
}

.tool {
    display: flex;
    align-items: center;
    justify-content: center;
    width: 30px;
}

.tool svg,
.window-buttons svg {
    width: 20px;
    height: 20px;
}

.drop {
    display: flex;
    align-items: center;
    justify-content: center;
    width: 14px;
}

.drop.faded::after {
    border-top-color: #999;
}

.selected,
.boxed {
    margin: 2px 0;
    border: 1px solid #777;
}

.selected {
    background: #b0b0b0;
}

.boxed {
    border-left: none;
}

.doc-title {
    flex: 1;
    text-align: center;
}

.search {
    display: flex;
    align-items: center;
    width: 202px;
    height: 22px;
    padding: 0 0 0 6px;
    border: 1px solid #b4b4b4;
    background: #fff;
}

.search input {
    flex: 1;
    margin-left: 6px;
}

.search input::placeholder {
    color: #555;
    opacity: 1;
}

.search .prompt,
.search .glass {
    width: 14px;
    height: 14px;
    color: #777;
}

.search .drop {
    margin-left: 3px;
}

.window-buttons {
    display: flex;
    padding: 0 3px;
    color: #333;
}

.window-buttons button {
    display: flex;
    justify-content: center;
    width: 36px;
}

/* Ribbon */
.ribbon {
    display: flex;
    height: 82px;
    padding-left: 3px;
    border-bottom: 1px solid #7d7d82;
}

.group {
    display: flex;
    margin: 1px 0 3px;
    padding: 0 1px 0 2px;
    border-right: 1px solid #c6c6c6;
}

.group.last {
    border-right: none;
}

.cmd {
    display: flex;
    flex-direction: column;
    align-items: center;
    padding: 5px 5px 8px 4px;
}

.cmd svg {
    width: 19px;
    height: 19px;
    margin-bottom: 1px;
}

.cmd.more::after {
    margin-top: auto;
}

.cmd:disabled {
    color: #b8b8b8;
}

.collapse {
    align-self: flex-end;
    margin: 0 7px 6px auto;
    color: #333;
}

.collapse svg {
    width: 14px;
    height: 14px;
}

/* Work area */
.work {
    display: flex;
    flex: 1;
    flex-direction: column;
    min-height: 0;
    background:
        radial-gradient(ellipse 58% 62% at 0% 0%, #fff 40%, rgba(255, 255, 255, 0.85) 62%, rgba(255, 255, 255, 0) 100%),
        radial-gradient(ellipse 40% 34% at 42% 12%, #fff 30%, rgba(255, 255, 255, 0) 100%),
        radial-gradient(ellipse 20% 50% at 100% 10%, rgba(241, 242, 245, 0.9), rgba(241, 242, 245, 0) 100%),
        linear-gradient(#e4e7f0 0%, #e0e3ec 25%, #dbdee8 46%, #dfe1eb 53%, #eaecf3 59%, #f6f7fa 64%, #fdfdfe 72%, #fff 88%, #f7f7fa 100%);
}

.cmd-tabs {
    display: flex;
    height: 22px;
}

.cmd-tabs button {
    padding: 0 9px;
    border: solid #7d7d82;
    border-width: 0 1px 1px 0;
    background: #d4d4d4;
    color: #333;
}

.cmd-tabs .active {
    padding: 0 8px;
    border-bottom: none;
    background: #f8f8f8;
    font-weight: bold;
}

.columns {
    display: flex;
    flex: 1;
    min-height: 0;
}

/* Feature manager */
.panel {
    display: flex;
    flex-direction: column;
    width: 230px;
    padding-right: 2px;
    border-right: 1px solid #84848c;
    border-left: 1px solid #c8c8c8;
    background: #f6f6f6;
}

.grip {
    display: flex;
    align-items: center;
    justify-content: center;
    height: 20px;
    border-top: 2px solid #c5cbe0;
    border-bottom: 1px solid #c0c0c0;
}

.grip i {
    width: 6px;
    height: 6px;
    border: 1px solid #999;
    border-radius: 50%;
    background: #ddd;
}

.panel-tabs {
    position: relative;
    display: flex;
    height: 26px;
    margin-top: 4px;
    border-top: 1px solid #84848c;
    background: #d4d4d4;
}

.panel-tabs > button {
    display: flex;
    align-items: center;
    justify-content: center;
    width: 40px;
    border: solid #84848c;
    border-width: 0 1px 1px 0;
}

.panel-tabs > .active {
    border-bottom: none;
    background: #f8f8f8;
}

.panel-tabs svg {
    width: 18px;
    height: 18px;
}

/* lies over the tabs that do not fit */
.panel-scroll {
    position: absolute;
    right: 0;
    bottom: 0;
    display: flex;
}

.panel-scroll button {
    display: flex;
    align-items: center;
    justify-content: center;
    width: 18px;
    height: 19px;
    border: 1px solid #aaa;
    background: #f8f8f8;
}

.panel-scroll i {
    border: 3px solid transparent;
}

.panel-scroll .left {
    border-right: 4px solid #111;
    border-left: none;
}

.panel-scroll .right {
    border-left: 4px solid #111;
    border-right: none;
}

.filter {
    height: 25px;
    margin: 1px 3px 0 4px;
    padding: 3px 2px;
    border: 1px solid #c4c4c4;
}

.filter button {
    display: flex;
    align-items: center;
}

.filter svg {
    width: 18px;
    height: 18px;
}

.tree {
    margin: 0;
    padding: 0;
    overflow: hidden;
    list-style: none;
}

.tree li {
    display: flex;
    align-items: center;
    gap: 5px;
    height: 22px;
    padding-left: 26px;
    white-space: nowrap;
}

.tree .root {
    gap: 6px;
    padding-left: 4px;
    color: #8a8a22;
}

.tree .component {
    gap: 7px;
    color: #8a8a22;
    font-size: 12px;
}

.tree svg {
    width: 18px;
    height: 18px;
}

.tree .warn {
    width: 16px;
    height: 16px;
}

.tree .expand {
    margin: 0 7px 0 -17px;
    border: 4px solid transparent;
    border-left: 5px solid #555;
    border-right: none;
}

.tree .component .expand {
    margin-right: 5px;
}

.rollback {
    height: 3px;
    margin-bottom: auto;
    background: #4590b4;
}

.h-scroll {
    height: 21px;
    padding: 7px 17px;
    border-bottom: 3px solid #fff;
    background: #eee;
}

.h-scroll i {
    display: block;
    width: 57%;
    height: 2px;
    background: #878787;
}

/* Graphics area */
.viewport {
    position: relative;
    flex: 1;
    min-width: 0;
}

.model {
    width: 100%;
    height: 100%;
}

/* toolbars float over the model */
.hud {
    position: absolute;
    top: -17px;
    right: 6px;
    left: 0;
    display: flex;
    justify-content: center;
    opacity: 0.85;
}

.hud button {
    display: flex;
    align-items: center;
    justify-content: space-between;
    width: 26px;
    padding: 0 4px;
}

.hud .wide {
    width: 40px;
}

.hud svg {
    width: 18px;
    height: 20px;
}

.hud .caret {
    border-top-color: #888;
}

.doc-controls {
    position: absolute;
    top: -17px;
    right: 7px;
    display: flex;
    color: #8f8f94;
}

.doc-controls button {
    width: 26px;
    padding: 0 3px;
}

.doc-controls svg {
    width: 20px;
    height: 20px;
}

.task-pane {
    position: absolute;
    top: 28px;
    right: 0;
    display: flex;
    flex-direction: column;
    border: solid #84848c;
    border-width: 1px 0 0 1px;
    background: #d8d8d8;
}

.task-pane button {
    display: flex;
    align-items: center;
    justify-content: center;
    width: 25px;
    height: 24px;
    border-bottom: 1px solid #84848c;
}

.task-pane .active {
    background: #fff;
}

.task-pane svg {
    width: 20px;
    height: 20px;
}

.splitter {
    position: absolute;
    top: 399px;
    left: 0;
    display: flex;
    align-items: center;
    justify-content: center;
    width: 8px;
    height: 39px;
    border: 1px solid #84848c;
    border-left: none;
    background: #fafafa;
}

.splitter i {
    width: 5px;
    height: 5px;
    border: 1px solid #999;
    border-radius: 50%;
}

.tooltip {
    position: absolute;
    top: 473px;
    left: 781px;
    padding: 2px 4px 3px;
    border: 1px solid #e8e8e8;
    background: #fff;
    box-shadow: 2px 2px 2px rgba(0, 0, 0, 0.45);
    color: #555;
    font-size: 12px;
}

/* Model tabs */
.model-tabs {
    display: flex;
    height: 16px;
    border-top: 1px solid #84848c;
    border-bottom: 1px solid #84848c;
    background: #f6f6f6;
}

.model-tabs > button {
    padding: 0 10px 2px;
    border-right: 1px solid #84848c;
    background: #d4d4d4;
    line-height: 12px;
}

.model-tabs > .active {
    padding: 0 9px 2px 13px;
    background: #fff;
    font-weight: bold;
}

.steps {
    display: flex;
    width: 67px;
    background: #b0b4b8;
}

.steps button {
    flex: 1;
    border-right: 1px solid #8a8e92;
}

.steps svg {
    height: 14px;
    fill: #8a8e94;
    stroke: #8a8e94;
}

/* Status bar */
.status {
    display: flex;
    align-items: center;
    height: 18px;
    padding: 0 2px;
    background: #fafafa;
}

.edition {
    margin-right: auto;
}

.mode {
    margin-left: 18px;
}

.units {
    display: flex;
    align-items: center;
    gap: 28px;
    margin: 0 26px 0 128px;
}

.units .up {
    border: 3px solid transparent;
    border-top: none;
    border-bottom: 4px solid #333;
}

.tag {
    width: 18px;
    height: 14px;
}

/* Taskbar */
.taskbar {
    display: grid;
    grid-template-columns: 1fr auto 1fr;
    align-items: center;
    height: 48px;
    background: linear-gradient(90deg, #231e22 0%, #1f1c26 30%, #201d20 38%, #2d2316 45%, #201f1c 48%, #1b2026 52%, #1f1b29 60%, #211c26 72%, #26221f 80%, #2a2917 82%, #232021 86%, #201f22 100%);
    color: #fff;
    font-family: "Open Sans", "Noto Sans", sans-serif;
}

.apps {
    display: flex;
    align-items: center;
}

.app {
    position: relative;
    display: flex;
    align-items: center;
    justify-content: center;
    width: 40px;
    height: 40px;
    margin: 0 2px;
}

.app > svg {
    width: 24px;
    height: 24px;
}

.app.current {
    border: 1px solid #3d3b33;
    border-radius: 4px;
    background: #33322a;
}

/* running marks under the icons */
.app.current::after,
.app.open::after {
    content: "";
    position: absolute;
    bottom: 1px;
    width: 6px;
    height: 3px;
    border-radius: 2px;
    background: #a5a2ab;
}

.app.current::after {
    bottom: 0;
    width: 16px;
    background: #c5b8e6;
}

.badge {
    position: absolute;
    top: 3px;
    right: 2px;
    width: 16px;
    height: 16px;
    border-radius: 50%;
    font-size: 10px;
    line-height: 16px;
}

.badge.blue {
    background: #1284c4;
}

.badge.red {
    background: #d8494f;
}

.badge.purple {
    padding: 1px;
    background: #2a1450;
}

.sw,
.yr,
.ff,
.fus {
    fill: #fff;
    font-size: 9px;
    font-weight: bold;
}

.yr {
    font-size: 7px;
}

.ff {
    font-size: 13px;
}

.fus {
    font-size: 6px;
}

.task-search {
    display: flex;
    align-items: center;
    width: 220px;
    height: 32px;
    margin: 0 2px 0 3px;
    padding: 0 5px 0 11px;
    border: 1px solid #514c51;
    border-radius: 16px;
    background: #3a3539;
}

.task-search .glass {
    width: 15px;
    height: 15px;
}

.task-search input {
    flex: 1;
    margin-left: 10px;
    font-size: 13px;
}

.task-search input::placeholder {
    color: #d5d2d5;
    opacity: 1;
}

.trophy {
    width: 48px;
    height: 26px;
}

.tray {
    display: flex;
    align-items: center;
    justify-content: flex-end;
    padding-right: 20px;
}

.hidden-icons svg {
    width: 14px;
    height: 14px;
}

.lang {
    margin: 0 17px 0 23px;
    font-size: 12px;
}

.net {
    display: flex;
    gap: 6px;
    margin-right: 14px;
}

.net svg {
    width: 18px;
    height: 18px;
}

.clock {
    display: flex;
    flex-direction: column;
    align-items: flex-end;
    margin-right: 7px;
    font-size: 12px;
    line-height: 16px;
}

.bell svg {
    width: 15px;
    height: 16px;
}
```
